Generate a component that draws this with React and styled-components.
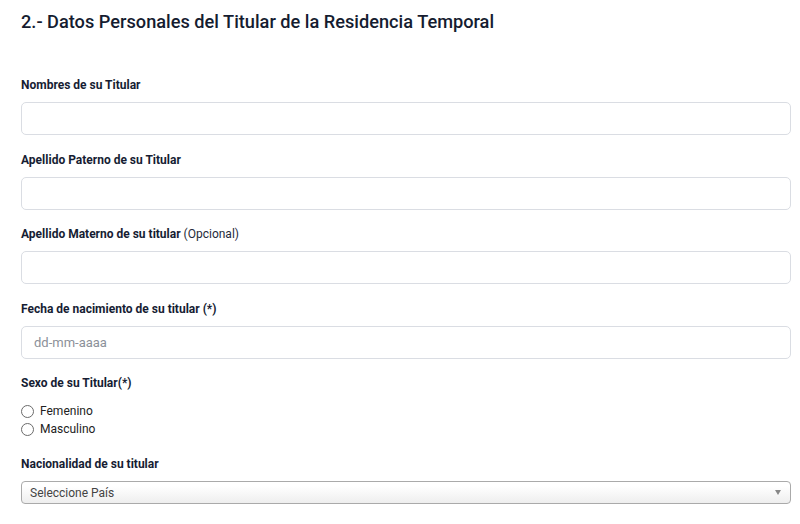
import React from 'react';
import styled, { createGlobalStyle } from 'styled-components';

const Global = createGlobalStyle`
  body {
    margin: 0;
    background: #fff;
    font-family: Roboto, "Liberation Sans", sans-serif;
  }
`;

const Page = styled.div`
  padding: 10px 9px 20px 21px;
`;

const Title = styled.h2`
  margin: 0 0 43px;
  font-size: 18.2px;
  line-height: 24px;
  font-weight: 500;
  color: #151c30;
`;

const Field = styled.div`
  margin-bottom: ${p => p.after || 16.5}px;
`;

const Label = styled.div`
  font-size: 12px;
  line-height: 16px;
  font-weight: 700;
  color: #161d33;
  margin-bottom: ${p => p.gap || 9}px;

  span {
    font-weight: 400;
    color: #252a3a;
  }
`;

const Input = styled.input`
  display: block;
  box-sizing: border-box;
  width: 100%;
  height: 33px;
  border: 1px solid #dadde3;
  border-radius: 5px;
  padding: 0 12px;
  font-family: inherit;
  font-size: 13px;
  color: #333;
  background: #fff;
  outline: none;

  &::placeholder {
    color: #8c9099;
  }
`;

const RadioRow = styled.label`
  display: flex;
  align-items: center;
  height: 18px;
  font-size: 12px;
  color: #222;
  gap: 6px;
`;

const Circle = styled.span`
  box-sizing: border-box;
  width: 13px;
  height: 13px;
  border: 1px solid #6b6b6b;
  border-radius: 50%;
  background: #fff;
`;

const Select = styled.div`
  box-sizing: border-box;
  height: 23px;
  border: 1px solid #aaa;
  border-radius: 4px;
  background: linear-gradient(#ffffff 20%, #eeeeee 100%);
  display: flex;
  align-items: center;
  justify-content: space-between;
  padding: 0 9px 0 8px;
  font-size: 12px;
  color: #444;
`;

const Arrow = styled.span`
  width: 0;
  height: 0;
  border-left: 3.5px solid transparent;
  border-right: 3.5px solid transparent;
  border-top: 5px solid #888;
`;

const fields = [
  { label: 'Nombres de su Titular' },
  { label: 'Apellido Paterno de su Titular' },
  { label: 'Apellido Materno de su titular', extra: '(Opcional)' },
  { label: 'Fecha de nacimiento de su titular (*)', placeholder: 'dd-mm-aaaa' },
];

export default function App() {
  return (
    <Page>
      <Global />
      <Title>2.- Datos Personales del Titular de la Residencia Temporal</Title>
      {fields.map(f => (
        <Field key={f.label}>
          <Label>
            {f.label}
            {f.extra && <span> {f.extra}</span>}
          </Label>
          <Input placeholder={f.placeholder || ''} />
        </Field>
      ))}
      <Field after={18}>
        <Label gap={11}>Sexo de su Titular(*)</Label>
        <RadioRow><Circle />Femenino</RadioRow>
        <RadioRow><Circle />Masculino</RadioRow>
      </Field>
      <Field>
        <Label>Nacionalidad de su titular</Label>
        <Select>
          Seleccione País
          <Arrow />
        </Select>
      </Field>
    </Page>
  );
}
